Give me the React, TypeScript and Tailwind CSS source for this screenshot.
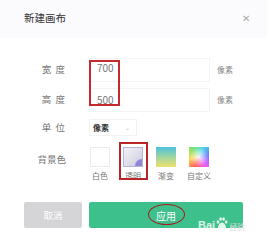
import React from "react";

const font = { fontFamily: '"Noto Sans CJK SC", "Noto Sans", sans-serif' };

function Label({ children, spaced = true }: { children: React.ReactNode; spaced?: boolean }) {
  return (
    <div
      className={
        spaced
          ? "w-[42px] text-right text-[9.5px] leading-none text-[#777] tracking-[1px]"
          : "w-[42px] text-right text-[9.5px] leading-none text-[#777]"
      }
    >
      {children}
    </div>
  );
}

export default function App() {
  return (
    <div
      className="relative w-[267px] h-[244px] overflow-hidden bg-white"
      style={font}
    >
      {/* header */}
      <div className="flex items-center justify-between pl-[24px] pr-[17px] pt-[12px] bg-[#fbfafc] h-[38px] pb-[14px]">
        <span className="text-[10.5px] text-[#333] leading-none">新建画布</span>
        <span className="text-[10px] text-[#aaa] leading-none">✕</span>
      </div>

      <div className="pl-[24px]">
        {/* width */}
        <div className="flex items-center mt-[20px] h-[24px]">
          <Label>宽 度</Label>
          <div className="ml-[23px] w-[121px] h-[24px] border border-[#f4f4f4] flex items-start pl-[7px] pt-[4px] text-[10px] leading-none text-[#777]">
            700
          </div>
          <span className="ml-[7px] text-[8px] text-[#888] leading-none">像素</span>
        </div>
        {/* height */}
        <div className="flex items-center mt-[6px] h-[24px]">
          <Label>高 度</Label>
          <div className="ml-[23px] w-[121px] h-[24px] border border-[#f4f4f4] flex items-start pl-[7px] pt-[6px] text-[10px] leading-none text-[#777]">
            500
          </div>
          <span className="ml-[7px] text-[8px] text-[#888] leading-none">像素</span>
        </div>
        {/* unit */}
        <div className="flex items-center mt-[7px] h-[17px]">
          <Label>单 位</Label>
          <div className="ml-[23px] w-[48px] h-[17px] border border-[#f2f2f2] flex items-center justify-between pl-[3px] pr-[6px]">
            <span className="text-[8px] font-bold text-[#333] leading-none">像素</span>
            <span className="text-[6px] text-[#bbb] leading-none">⌄</span>
          </div>
        </div>
        {/* background */}
        <div className="flex items-start mt-[11px]">
          <div className="pt-[8px]">
            <Label spaced={false}>背景色</Label>
          </div>
          <div className="ml-[24px] flex gap-[13px]">
            <div className="flex flex-col items-center w-[20px]">
              <div className="w-[20px] h-[20px] border border-[#ececec] bg-white" />
              <span className="mt-[5px] text-[8px] text-[#777] leading-none whitespace-nowrap">白色</span>
            </div>
            <div className="flex flex-col items-center w-[20px]">
              <div className="relative w-[20px] h-[20px] border border-[#b8b4d8] bg-[linear-gradient(135deg,#f3f2f7,#dcdce8_60%,#c8c6e0)]">
                <div className="absolute right-0 bottom-0 w-[7px] h-[7px] bg-[#8f86d6] rounded-tl-full" />
              </div>
              <span className="mt-[5px] text-[8px] text-[#777] leading-none whitespace-nowrap">透明</span>
            </div>
            <div className="flex flex-col items-center w-[20px]">
              <div className="w-[20px] h-[20px] bg-[linear-gradient(180deg,#4cc2dc,#a7d79a_55%,#efe070)]" />
              <span className="mt-[5px] text-[8px] text-[#777] leading-none whitespace-nowrap">渐变</span>
            </div>
            <div className="flex flex-col items-center w-[20px]">
              <div className="w-[20px] h-[20px] bg-[conic-gradient(from_200deg,#ff5a5a,#ffd54a,#7ee36a,#4ad8e8,#6a7cff,#e65aff,#ff5a5a)]">
                <div className="w-full h-full bg-[radial-gradient(circle_at_50%_50%,rgba(255,255,255,0.9),rgba(255,255,255,0)_70%)]" />
              </div>
              <span className="mt-[5px] text-[8px] text-[#777] leading-none whitespace-nowrap">自定义</span>
            </div>
          </div>
        </div>

        {/* buttons */}
        <div className="flex gap-[7px] mt-[22px]">
          <div className="w-[58px] h-[26px] rounded-[2px] bg-[#d5d5d8] flex items-center justify-center text-[9.5px] text-white">
            取消
          </div>
          <div className="w-[154px] h-[26px] rounded-[2px] bg-[#3ec08d] flex items-center justify-center text-[10px] text-white">
            应用
          </div>
        </div>
      </div>

      {/* annotations */}
      <div className="absolute left-[89px] top-[60px] w-[31px] h-[46px] border-2 border-[#c42a2e]" />
      <div className="absolute left-[119px] top-[142px] w-[29px] h-[38px] border-2 border-[#b82428]" />
      <div className="absolute left-[148px] top-[204px] w-[37px] h-[21px] rounded-[50%] border-[1.5px] border-[#a51c20]" />

      {/* watermark */}
      <div className="absolute left-[198px] top-[216px] flex items-end text-white/80 leading-none">
        <span className="text-[11px] font-bold" style={{ fontFamily: '"Liberation Sans", sans-serif' }}>Bai</span>
        <svg width="14" height="14" viewBox="0 0 14 14" className="mb-[1px]">
          <g fill="rgba(255,255,255,0.85)">
            <ellipse cx="3" cy="6" rx="1.4" ry="1.8" />
            <ellipse cx="5.6" cy="3" rx="1.4" ry="1.8" />
            <ellipse cx="8.6" cy="3" rx="1.4" ry="1.8" />
            <ellipse cx="11.2" cy="6" rx="1.4" ry="1.8" />
            <path d="M7 6.5c2 0 4 3 4 5s-2 1.8-4 1.8-4 .2-4-1.8 2-5 4-5z" />
          </g>
        </svg>
        <span className="text-[8px] text-[#ddd]">经验</span>
      </div>
    </div>
  );
}
